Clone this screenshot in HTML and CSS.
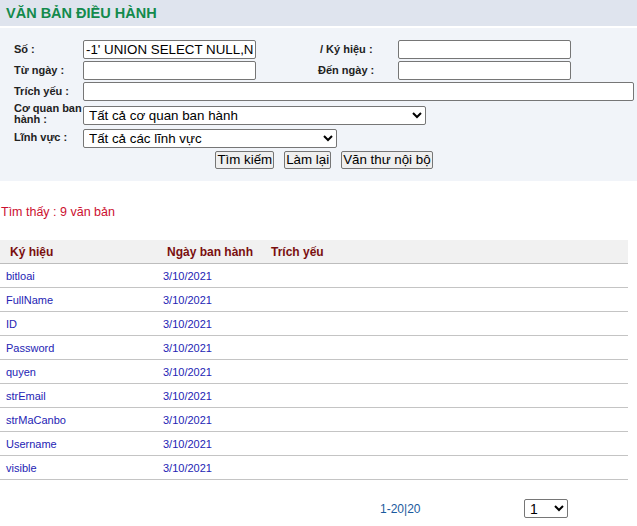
FILE: index.html
```html
<!DOCTYPE html>
<html lang="vi">
<head>
<meta charset="utf-8">
<title>Văn bản điều hành</title>
<link rel="stylesheet" href="styles.css">
</head>
<body>
<div class="page">
  <div class="titlebar"><h1 class="title">VĂN BẢN ĐIỀU HÀNH</h1></div>
  <form class="panel">
    <div class="grid">
      <label class="lbl">Số :</label>
      <input class="field" type="text" value="-1' UNION SELECT NULL,NULL--">
      <label class="lbl lbl-r">/ Ký hiệu :</label>
      <input class="field" type="text">

      <label class="lbl">Từ ngày :</label>
      <input class="field" type="text">
      <label class="lbl lbl-r2">Đến ngày :</label>
      <input class="field" type="text">

      <label class="lbl">Trích yếu :</label>
      <input class="field wide" type="text">

      <label class="lbl lbl-2l">Cơ quan ban hành :</label>
      <div class="span3"><select class="sel sel-cq"><option>Tất cả cơ quan ban hành</option></select></div>

      <label class="lbl">Lĩnh vực :</label>
      <div class="span3"><select class="sel sel-lv"><option>Tất cả các lĩnh vực</option></select></div>
    </div>
    <div class="buttons">
      <button type="button" class="btn">Tìm kiếm</button>
      <button type="button" class="btn">Làm lại</button>
      <button type="button" class="btn">Văn thư nội bộ</button>
    </div>
  </form>

  <p class="found">Tìm thấy : 9 văn bản</p>

  <table class="list">
    <thead>
      <tr><th class="c1">Ký hiệu</th><th class="c2">Ngày ban hành</th><th class="c3">Trích yếu</th></tr>
    </thead>
    <tbody>
      <tr><td>bitloai</td><td>3/10/2021</td><td></td></tr>
      <tr><td>FullName</td><td>3/10/2021</td><td></td></tr>
      <tr><td>ID</td><td>3/10/2021</td><td></td></tr>
      <tr><td>Password</td><td>3/10/2021</td><td></td></tr>
      <tr><td>quyen</td><td>3/10/2021</td><td></td></tr>
      <tr><td>strEmail</td><td>3/10/2021</td><td></td></tr>
      <tr><td>strMaCanbo</td><td>3/10/2021</td><td></td></tr>
      <tr><td>Username</td><td>3/10/2021</td><td></td></tr>
      <tr><td>visible</td><td>3/10/2021</td><td></td></tr>
    </tbody>
  </table>

  <div class="pager">
    <span class="count">1-20|20</span>
    <select class="sel sel-page"><option>1</option></select>
  </div>
</div>
</body>
</html>
```

FILE: styles.css
```css
html, body {
  margin: 0;
  padding: 0;
  background: #fff;
}
body {
  font-family: "Liberation Sans", Arial, sans-serif;
  color: #222;
}
.page {
  width: 637px;
}
.titlebar {
  background: #dfe4ee;
  height: 26px;
  display: flex;
  align-items: center;
  padding-left: 6px;
  margin-bottom: 2px;
}
.title {
  margin: 0;
  font-size: 14.5px;
  font-weight: bold;
  color: #138a4c;
}
.panel {
  background: #f1f4f9;
  padding: 12px 3px 12px 14px;
  margin: 0;
}
.grid {
  display: grid;
  grid-template-columns: 69px 235px 80px 236px;
  row-gap: 2px;
  align-items: center;
}
.lbl {
  font-size: 11px;
  font-weight: bold;
  color: #222;
  line-height: 11px;
}
.lbl-r { padding-left: 2px; }
.field {
  box-sizing: border-box;
  width: 173px;
  height: 19px;
  margin: 0;
  padding: 0 2px;
  border: 1px solid #767676;
  border-radius: 2px;
  background: #fff;
  font-family: "Liberation Sans", Arial, sans-serif;
  font-size: 13.33px;
  color: #000;
}
.field.wide {
  grid-column: 2 / 5;
  width: 551px;
}
.span3 {
  grid-column: 2 / 5;
  display: flex;
}
.grid > .lbl-2l + .span3 { margin-top: 2px; }
.sel {
  box-sizing: border-box;
  height: 19px;
  margin: 0;
  padding: 0 0 0 1px;
  border: 1px solid #767676;
  border-radius: 2px;
  background: #fff;
  font-family: "Liberation Sans", Arial, sans-serif;
  font-size: 13.33px;
  color: #000;
}
.sel-cq { width: 343px; }
.sel-lv { width: 254px; margin-top: 2px; }
.buttons {
  display: flex;
  justify-content: center;
  gap: 10px;
  margin-top: 3px;
}
.btn {
  box-sizing: border-box;
  height: 18px;
  margin: 0;
  padding: 0 1px;
  border: 1px solid #767676;
  border-radius: 2px;
  background: #efefef;
  font-family: "Liberation Sans", Arial, sans-serif;
  font-size: 13.33px;
  line-height: 14px;
  color: #000;
}
.found {
  margin: 24px 0 0 0;
  padding-left: 1px;
  height: 16px;
  font-size: 12.5px;
  color: #cc1030;
}
.list {
  margin-top: 19px;
  width: 628px;
  border-collapse: collapse;
  font-size: 11px;
}
.list th {
  background: #f1f1f1;
  height: 23px;
  padding: 0 0 0 10px;
  text-align: left;
  font-size: 12px;
  font-weight: bold;
  color: #7a0f0f;
  border-bottom: 1px solid #bdbdbd;
}
.list th.c1 { width: 147px; }
.list th.c2 { width: 94px; }
.list td {
  height: 23px;
  padding: 0 0 0 6px;
  color: #2424b4;
  border-bottom: 1px solid #c4c4c4;
}
.pager {
  display: flex;
  align-items: center;
  margin-top: 19px;
  padding-left: 380px;
  font-size: 12px;
}
.count {
  color: #1a5a9e;
  width: 144px;
}
.sel-page {
  width: 44px;
  height: 19px;
  font-size: 14px;
}
```
